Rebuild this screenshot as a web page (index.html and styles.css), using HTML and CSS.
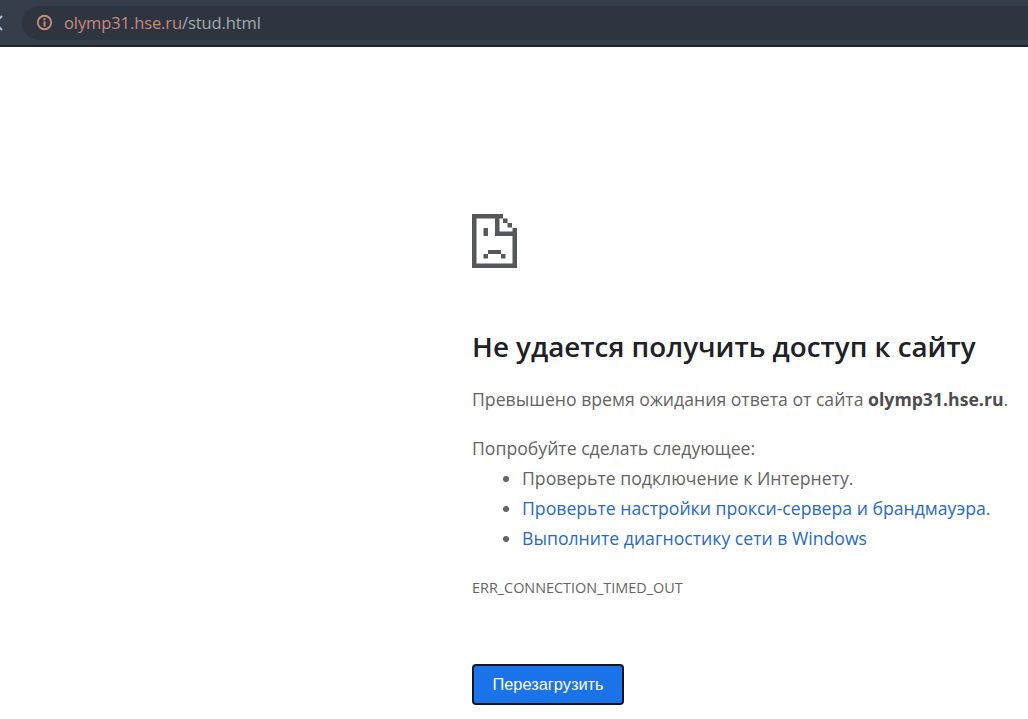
FILE: index.html

```html
<!DOCTYPE html>
<html lang="ru">
<head>
    <meta charset="UTF-8">
    <title>olymp31.hse.ru</title>
    <link rel="stylesheet" href="styles.css">
</head>
<body>
    <div class="toolbar">
        <svg class="close-icon" width="6" height="18" viewBox="0 0 6 18">
            <path d="M-5 9 L2 2 M-5 9 L2 16" fill="none" stroke="#a9c0d6" stroke-width="2.2"/>
        </svg>
        <div class="omnibox">
            <svg class="info-icon" width="17" height="17" viewBox="0 0 17 17">
                <circle cx="8.5" cy="8.5" r="6.7" fill="none" stroke="#c98a7c" stroke-width="1.9"/>
                <rect x="7.5" y="4.2" width="2" height="2" fill="#c98a7c"/>
                <rect x="7.5" y="7.4" width="2" height="5.2" fill="#c98a7c"/>
            </svg>
            <span class="url"><span class="url-host">olymp31.hse.ru</span>/stud.html</span>
        </div>
    </div>

    <div class="error-page">
        <svg class="sad-icon" width="45" height="54" viewBox="0 0 45 54" fill="#555759">
            <rect x="0" y="0" width="4.5" height="54"/>
            <rect x="0" y="0" width="31" height="4.5"/>
            <rect x="40.5" y="14" width="4.5" height="40"/>
            <rect x="0" y="49.5" width="45" height="4.5"/>
            <rect x="23" y="0" width="4.5" height="22"/>
            <rect x="23" y="17.5" width="22" height="4.5"/>
            <rect x="31" y="4.5" width="4.5" height="4.5"/>
            <rect x="35.5" y="9" width="4.5" height="4.5"/>
            <rect x="11.5" y="14" width="4.5" height="8"/>
            <rect x="16" y="36" width="13" height="4"/>
            <rect x="11.5" y="40" width="4.5" height="4.5"/>
            <rect x="29" y="40" width="4.5" height="4.5"/>
        </svg>
        <h1>Не удается получить доступ к сайту</h1>
        <p class="summary">Превышено время ожидания ответа от сайта <strong>olymp31.hse.ru</strong>.</p>
        <p class="try-title">Попробуйте сделать следующее:</p>
        <ul class="suggestions">
            <li>Проверьте подключение к Интернету.</li>
            <li><a href="#">Проверьте настройки прокси-сервера и брандмауэра</a>.</li>
            <li><a href="#">Выполните диагностику сети в Windows</a></li>
        </ul>
        <div class="error-code">ERR_CONNECTION_TIMED_OUT</div>
        <button class="reload-btn">Перезагрузить</button>
    </div>
</body>
</html>
```

FILE: styles.css

```css
* {
    margin: 0;
    padding: 0;
    box-sizing: border-box;
}

body {
    background-color: #fff;
    font-family: 'Open Sans', 'Noto Sans', sans-serif;
    color: #646464;
    overflow: hidden;
    height: 719px;
}

.toolbar {
    height: 47px;
    background-color: #363d4b;
    border-bottom: 2px solid #1f242b;
    padding-bottom: 5px;
    display: flex;
    align-items: flex-end;
}

.close-icon {
    flex: none;
    margin-bottom: 8px;
}

.omnibox {
    margin-left: 16px;
    height: 34px;
    flex: 1;
    padding-left: 14px;
    padding-bottom: 2px;
    border-radius: 17px 0 0 17px;
    background-color: #2e3440;
    display: flex;
    align-items: center;
    gap: 11px;
}

.info-icon {
    flex: none;
}

.url {
    font-size: 16.5px;
    letter-spacing: -0.1px;
    color: #a6aab0;
}

.url-host {
    color: #c98a7c;
}

.error-page {
    margin-left: 472px;
    width: 556px;
    padding-top: 167px;
}

.sad-icon {
    display: block;
    margin-bottom: 58px;
}

h1 {
    font-size: 27.8px;
    font-weight: 600;
    line-height: 40px;
    color: #202124;
    white-space: nowrap;
    margin-bottom: 18px;
}

.summary {
    font-size: 17.65px;
    line-height: 30px;
    white-space: nowrap;
    margin-bottom: 19px;
}

.summary strong {
    font-weight: 700;
    color: #4d4d4d;
}

.try-title {
    font-size: 17.65px;
    line-height: 30px;
}

.suggestions {
    padding-left: 50px;
    margin-bottom: 25px;
}

.suggestions li {
    font-size: 17.65px;
    line-height: 30px;
    white-space: nowrap;
}

.suggestions a {
    color: #2a69c4;
    text-decoration: none;
}

.error-code {
    font-size: 14.4px;
    line-height: 20px;
    margin-bottom: 66px;
}

.reload-btn {
    display: block;
    width: 152px;
    height: 41px;
    background-color: #1a73e8;
    color: #fff;
    border: 2px solid #101522;
    border-radius: 4px;
    font-family: 'Liberation Sans', Arial, sans-serif;
    font-size: 16.4px;
    cursor: pointer;
}
```
